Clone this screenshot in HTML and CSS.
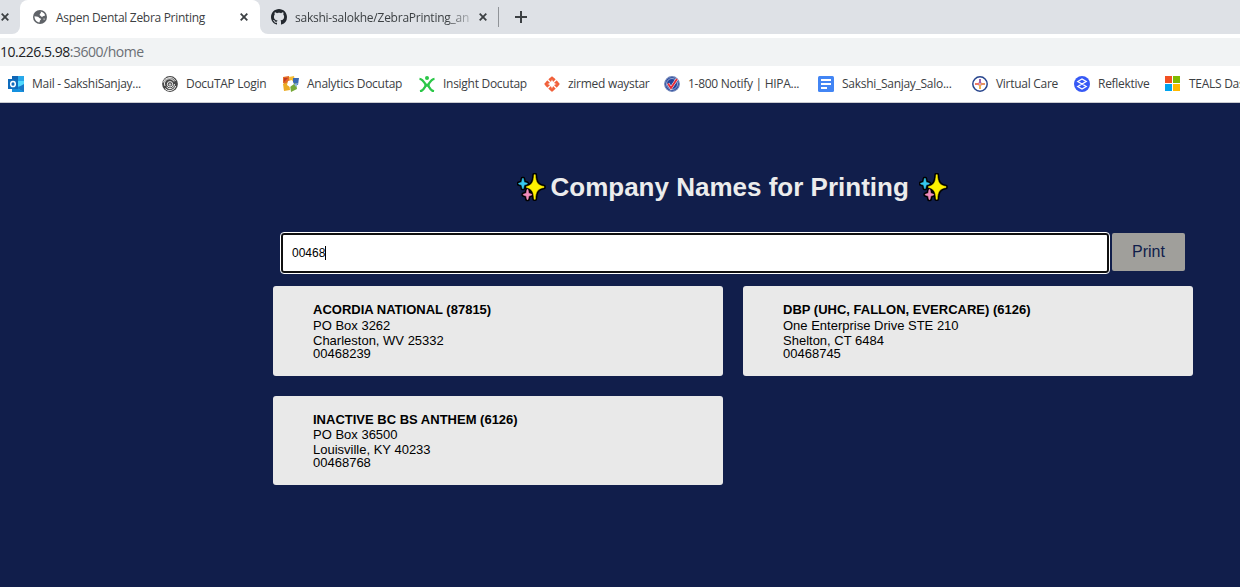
FILE: index.html
```html
<!DOCTYPE html>
<html lang="en">
<head>
<meta charset="utf-8">
<title>Aspen Dental Zebra Printing</title>
<link rel="stylesheet" href="styles.css">
</head>
<body>
<svg class="defs" width="0" height="0">
  <symbol id="close" viewBox="0 0 8 8"><path d="M.7.7l6.6 6.6M7.3.7L.7 7.3" stroke="#3c4043" stroke-width="1.8"/></symbol>
  <symbol id="sparkles" viewBox="0 0 29 29">
    <g stroke="#000" stroke-width="3.600" stroke-linejoin="round">
      <path d="M17.100 1.700h1.200C18.600 9 20.500 12.500 27 13.500v1C20.500 15.500 18.600 19 18.300 26.300h-1.200C16.800 19 14.900 15.500 9.500 14.500v-1C14.900 12.500 16.800 9 17.100 1.700z"/>
      <path d="M5.400 5.500h1l.8 3.800 3.100 1v.7l-3.100 1-.8 3.500h-1l-.8-3.500-3-1v-.7l3-1z"/>
      <path d="M10 16.500h1l.8 3.800 3 1v.7l-3 1-.8 3.500h-1l-.8-3.500-3-1v-.7l3-1z"/>
    </g>
    <path d="M17.100 1.700h1.200C18.600 9 20.500 12.500 27 13.500v1C20.500 15.500 18.600 19 18.300 26.300h-1.200C16.800 19 14.900 15.500 9.500 14.500v-1C14.900 12.500 16.800 9 17.100 1.700z" fill="#fff100" stroke="#fff100" stroke-width=".5"/>
    <path d="M5.400 5.500h1l.8 3.800 3.100 1v.7l-3.100 1-.8 3.500h-1l-.8-3.500-3-1v-.7l3-1z" fill="#35c8f0" stroke="#35c8f0" stroke-width=".5"/>
    <path d="M10 16.500h1l.8 3.800 3 1v.7l-3 1-.8 3.500h-1l-.8-3.500-3-1v-.7l3-1z" fill="#f38cbd" stroke="#f38cbd" stroke-width=".5"/>
  </symbol>
</svg>

<header class="browser">
  <div class="tabs">
    <div class="tab-prev"><svg class="x"><use href="#close"/></svg></div>
    <div class="tab active">
      <svg class="fav" viewBox="0 0 14 14"><circle cx="7" cy="7" r="7" fill="#5f6368"/><path d="M7.600 1.600c2 .2 3.900 1.700 4.500 3.600-.7 1-1.500.5-2.300 1.200-.8.800-1.900.3-2-.6-1.100-.1-1.300-.8-1-1.600.2-1 .9-.8 1.200-1.500zM1.500 6.300l3.300.5c1 .2 1.100 1.200 2.100 1.400 1.200.2 1.400 1.300.5 1.900-.8.600-.4 1.700-1 2.300C3.600 12.100 1.400 9.600 1.500 6.300zM10.500 8.600l1.400.2-1 1.400z" fill="#fff"/></svg>
      <span class="tab-title">Aspen Dental Zebra Printing</span>
      <svg class="x"><use href="#close"/></svg>
    </div>
    <div class="tab-strip">
      <div class="tab second">
        <svg class="fav github" viewBox="0 0 16 16"><path fill="#24292f" d="M8 0C3.580 0 0 3.580 0 8c0 3.540 2.290 6.530 5.470 7.590.4.070.55-.17.55-.38 0-.19-.01-.82-.01-1.490-2.010.37-2.530-.49-2.690-.94-.09-.23-.48-.94-.82-1.130-.28-.15-.68-.52-.01-.53.63-.01 1.080.58 1.230.82.72 1.210 1.870.87 2.330.66.07-.52.28-.87.51-1.070-1.780-.2-3.640-.89-3.640-3.950 0-.87.31-1.590.82-2.150-.08-.2-.36-1.020.08-2.120 0 0 .67-.21 2.200.82.64-.18 1.320-.27 2-.27s1.360.09 2 .27c1.530-1.040 2.200-.82 2.200-.82.44 1.100.16 1.920.08 2.120.51.56.82 1.270.82 2.150 0 3.070-1.870 3.750-3.650 3.950.29.25.54.73.54 1.480 0 1.070-.01 1.930-.01 2.200 0 .21.15.46.55.38A8.010 8.010 0 0 0 16 8c0-4.420-3.580-8-8-8z"/></svg>
        <span class="tab-title faded">sakshi-salokhe/ZebraPrinting_and</span>
        <svg class="x"><use href="#close"/></svg>
      </div>
      <i class="divider"></i>
      <svg class="plus" viewBox="0 0 12 12"><path d="M6 0v12M0 6h12" stroke="#3c4043" stroke-width="2"/></svg>
    </div>
  </div>
  <div class="address"><span class="host">10.226.5.98</span><span class="path">:3600/home</span></div>
  <nav class="bookmarks">
    <a><svg viewBox="0 0 16 16"><path d="M4 0h12v16H4z" fill="#35b8f1"/><path d="M4 0h6v8H4z" fill="#1066b5"/><path d="M10 0h6v5h-6z" fill="#28a8ea"/><path d="M10 5h6v5h-6z" fill="#50d9ff"/><path d="M4 10l12 6H4z" fill="#1490df"/><path d="M16 8v8L9 12z" fill="#1878c7"/><path d="M0 3h10v10H0z" fill="#0f6cbd"/><ellipse cx="5" cy="8" rx="2.300" ry="2.600" fill="none" stroke="#fff" stroke-width="1.500"/></svg><span>Mail - SakshiSanjay...</span></a>
    <a><svg viewBox="0 0 16 16"><circle cx="8" cy="8" r="7.900" fill="#484848"/><g fill="none" stroke="#fff" stroke-width=".9"><path d="M1.200 6.500A6.700 6.700 0 0 1 13.500 5M3 12.500A6.300 6.300 0 0 0 13.800 10M3 10A5 5 0 0 1 12 5.500M4.500 11A4.500 4.500 0 0 0 12.500 8"/><circle cx="8" cy="8.300" r="2.700"/><circle cx="8" cy="8.500" r=".8"/></g></svg><span>DocuTAP Login</span></a>
    <a><svg viewBox="0 0 16 16"><path d="M0 1l6-1 1 5-4 4-3-2z" fill="#e36b25"/><path d="M6 1l5-1 1 5-5 1z" fill="#f6bd36"/><path d="M10 2h6l-1 7-5-1z" fill="#3b69b2"/><path d="M0 8l6-2 1 8-6 1z" fill="#ecac24"/><path d="M7 9l6-2 1 6-6 3z" fill="#77a939"/><path d="M1 2h4L1 6z" fill="#c43827"/><path d="M5 5l4-1 2 4-4 3-3-2z" fill="#fff"/><path d="M11 8l4-1-2 4z" fill="#8fb4df"/></svg><span>Analytics Docutap</span></a>
    <a><svg viewBox="0 0 16 16"><circle cx="8" cy="2" r="2" fill="#2bc748"/><path d="M.5 2.800C3 3 5 5.800 6.500 8.200V10.300C5 13 3.500 15 1 15.500M15.500 2.800C13 3 11 5.800 9.500 8.200V10.300C11 13 12.500 15 15 15.500" fill="none" stroke="#2bc748" stroke-width="2.300"/><path d="M5.600 7.300q2.400 1.600 4.800 0l-.3 4q-2.100-1.800-4.200 0z" fill="#2bc748"/></svg><span>Insight Docutap</span></a>
    <a><svg viewBox="0 0 16 16"><path d="M8 .2C10 1.500 14.500 6 15.800 8 14.500 10 10 14.500 8 15.800 6 14.500 1.500 10 .2 8 1.500 6 6 1.500 8 .2z" fill="#f1603a"/><path d="M8 3.200Q8.800 7.200 12.800 8 8.800 8.800 8 12.800 7.200 8.800 3.200 8 7.200 7.200 8 3.200z" fill="#fff"/><path d="M2.500 2.500l11 11M13.500 2.500l-11 11" stroke="#fff" stroke-width="1.400"/></svg><span>zirmed waystar</span></a>
    <a><svg viewBox="0 0 16 16"><circle cx="8" cy="8" r="7.300" fill="#24449a" stroke="#6e84b9" stroke-width="1.200"/><circle cx="8" cy="8" r="5.500" fill="none" stroke="#b4c1e2" stroke-width=".8"/><path d="M4 7.500l3 4.500 6-9" fill="none" stroke="#fff" stroke-width="2.800"/><path d="M4 7.500l3 4.500 6-9" fill="none" stroke="#e52b38" stroke-width="1.900"/></svg><span>1-800 Notify | HIPA...</span></a>
    <a><svg viewBox="0 0 16 16"><rect width="16" height="16" rx="1.500" fill="#4285f4"/><path d="M3 4h10M3 8h10M3 12h6" stroke="#fff" stroke-width="2"/></svg><span>Sakshi_Sanjay_Salo...</span></a>
    <a><svg viewBox="0 0 16 16"><circle cx="8" cy="8" r="7.200" fill="#fff" stroke="#27458d" stroke-width="1.500"/><path d="M8 3v4" stroke="#9b62b1" stroke-width="2"/><path d="M8 9v4" stroke="#f1b34c" stroke-width="2"/><path d="M3 8h4" stroke="#ee7666" stroke-width="2"/><path d="M9 8h4" stroke="#e89262" stroke-width="2"/><path d="M6.500 6.500l3 3M9.500 6.500l-3 3" stroke="#d5a1bb"/></svg><span>Virtual Care</span></a>
    <a><svg viewBox="0 0 16 16"><circle cx="8" cy="8" r="8" fill="#3659f5"/><path d="M3.800 5.500L8 3l4.200 2.500L8 8zM3.800 10.500L8 8l4.200 2.500L8 13z" fill="none" stroke="#fff" stroke-width="1.300"/></svg><span>Reflektive</span></a>
    <a><svg viewBox="0 0 16 16"><path d="M0 0h7v7H0z" fill="#f25022"/><path d="M8 0h7v7H8z" fill="#7fba00"/><path d="M0 8h7v7H0z" fill="#00a4ef"/><path d="M8 8h7v7H8z" fill="#ffb900"/></svg><span>TEALS Das</span></a>
  </nav>
</header>

<main class="page">
  <h1><svg class="sparkle"><use href="#sparkles"/></svg><span>Company Names for Printing</span><svg class="sparkle"><use href="#sparkles"/></svg></h1>
  <div class="search">
    <div class="field"><span>00468</span><i class="caret"></i></div>
    <button class="print">Print</button>
  </div>
  <section class="cards">
    <article class="card"><b>ACORDIA NATIONAL (87815)</b><p>PO Box 3262</p><p>Charleston, WV 25332</p><p class="code">00468239</p></article>
    <article class="card"><b>DBP (UHC, FALLON, EVERCARE) (6126)</b><p>One Enterprise Drive STE 210</p><p>Shelton, CT 6484</p><p class="code">00468745</p></article>
    <article class="card short"><b>INACTIVE BC BS ANTHEM (6126)</b><p>PO Box 36500</p><p>Louisville, KY 40233</p><p class="code">00468768</p></article>
  </section>
</main>
</body>
</html>
```
FILE: styles.css
```css
* { box-sizing: border-box; }
body { margin: 0; width: 1240px; height: 587px; overflow: hidden; display: flex; flex-direction: column; background: #111e4b; font-family: "Liberation Sans", Arial, sans-serif; }
svg { display: block; flex: none; }
.defs { position: absolute; }
.browser { background: #fff; font-family: "Open Sans", "Noto Sans", sans-serif; color: #3c4043; border-bottom: 1px solid #c9cbd0; height: 103px; }
.tabs { display: flex; height: 34px; background: linear-gradient(#dee1e6 0 20px, #fff 20px); }
.tab-prev { width: 20px; background: #dee1e6; border-bottom-right-radius: 8px; padding: 13px 0 0 1px; }
.tab-strip { flex: 1; display: flex; background: #dee1e6; border-bottom-left-radius: 8px; }
.x { width: 8px; height: 8px; }
.tab { display: flex; align-items: center; white-space: nowrap; font-size: 12px; }
.active { width: 240px; padding-left: 13px; background: #fff; border-radius: 8px 8px 0 0; }
.fav { width: 14px; height: 14px; margin-right: 9px; }
.github { width: 16px; height: 16px; margin-right: 8px; }
.tab-title { letter-spacing: -0.3px; width: 184px; }
.second { width: 238px; padding-left: 11px; }
.faded { overflow: hidden; width: 175px; margin-right: 9px; letter-spacing: -0.24px; -webkit-mask-image: linear-gradient(90deg, #000 152px, transparent 182px); }
.divider { width: 1px; height: 20px; margin-top: 7px; background: #909398; }
.plus { width: 12px; height: 12px; margin: 11px 0 0 16px; }
.address { height: 28px; margin-top: 4px; background: #f1f3f4; font-size: 14px; line-height: 28px; letter-spacing: -0.48px; color: #6b6f74; }
.host { color: #202124; }
.bookmarks { display: grid; grid-template-columns: 154px 121px 136px 125px 120px 154px 154px 102px 91px 120px; height: 36px; padding-left: 8px; align-items: center; overflow: hidden; font-size: 12px; }
.bookmarks a { display: flex; align-items: center; gap: 8px; white-space: nowrap; letter-spacing: -0.28px; }
.bookmarks svg { width: 16px; height: 16px; }
.bookmarks span { padding-bottom: 1px; }
.page { padding: 67px 47px 0 273px; }
h1 { margin: 0; height: 34px; display: flex; align-items: center; justify-content: center; font-size: 26px; color: #ececec; white-space: nowrap; }
h1 span { width: 357px; margin: 0 12px 0 4px; }
.sparkle { width: 29px; height: 29px; margin-left: -1px; margin-right: 1px; }
.search { display: flex; gap: 3px; margin: 29px 0 0 8px; height: 53px; align-items: flex-start; }
.field { width: 828px; height: 40px; background: #fff; border: 2px solid #101010; border-radius: 3px; outline: 1px solid #fff; font-size: 12px; display: flex; align-items: center; padding: 0 0 1px 9px; }
.caret { width: 1px; height: 14px; background: #000; }
.print { width: 73px; height: 38px; border: 0; border-radius: 2px; background: #a09f9b; color: #111e4b; font: 16px "Liberation Sans", Arial, sans-serif; padding: 0; }
.cards { display: grid; grid-template-columns: 450px 450px; gap: 20px; }
.card { height: 90px; background: #e9e9e9; border-radius: 3px; padding: 16px 40px 0; font-size: 13px; line-height: 15px; color: #000; white-space: nowrap; }
.card b { display: block; margin-bottom: 1px; }
.card p { margin: 0; }
.card .code { margin-top: -2px; }
.short { height: 89px; }
.short b { margin-bottom: 0; }
```
